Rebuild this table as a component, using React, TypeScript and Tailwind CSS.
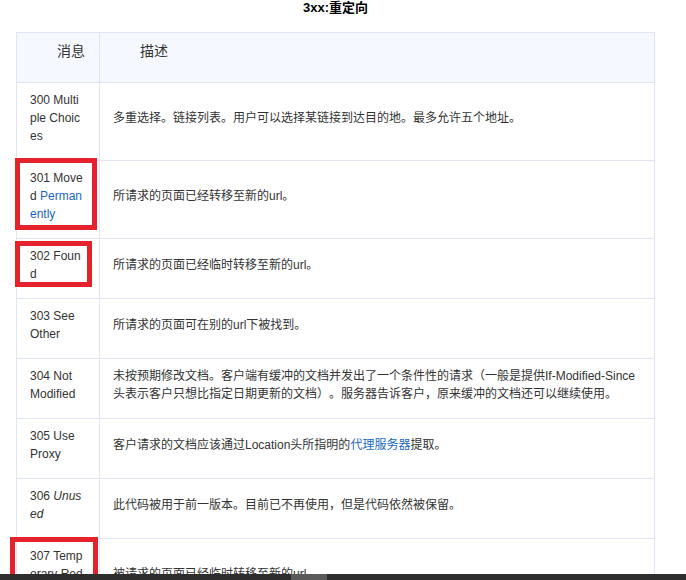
import React from "react";

type Row = { code: React.ReactNode; desc: React.ReactNode };

const link = "text-[#1a66c5]";

const rows: Row[] = [
  {
    code: <>300 Multiple Choices</>,
    desc: <>多重选择。链接列表。用户可以选择某链接到达目的地。最多允许五个地址。</>,
  },
  {
    code: (
      <>
        301 Moved <a className={link}>Permanently</a>
      </>
    ),
    desc: <>所请求的页面已经转移至新的url。</>,
  },
  {
    code: <>302 Found</>,
    desc: <>所请求的页面已经临时转移至新的url。</>,
  },
  {
    code: <>303 See Other</>,
    desc: <>所请求的页面可在别的url下被找到。</>,
  },
  {
    code: <>304 Not Modified</>,
    desc: (
      <>
        未按预期修改文档。客户端有缓冲的文档并发出了一个条件性的请求（一般是提供If-Modified-Since头表示客户只想比指定日期更新的文档）。服务器告诉客户，原来缓冲的文档还可以继续使用。
      </>
    ),
  },
  {
    code: <>305 Use Proxy</>,
    desc: (
      <>
        客户请求的文档应该通过Location头所指明的<a className={link}>代理服务器</a>提取。
      </>
    ),
  },
  {
    code: (
      <>
        306 <i>Unused</i>
      </>
    ),
    desc: <>此代码被用于前一版本。目前已不再使用，但是代码依然被保留。</>,
  },
  {
    code: <>307 Temporary Redirect</>,
    desc: <>被请求的页面已经临时转移至新的url。</>,
  },
];

export default function App() {
  return (
    <div className="relative w-[686px] h-[580px] overflow-hidden bg-white text-[#333] [font-family:'Liberation_Sans','Noto_Sans_CJK_SC',sans-serif] [text-spacing-trim:space-all]">
      <div className="ml-[16px] w-[639px] text-center text-[13px] font-bold leading-[16px] text-black">
        3xx:重定向
      </div>
      <div className="mt-[16px] ml-[16px] w-[639px] border border-[#e0e4f5]">
        <div className="flex h-[50px] border-b border-[#e0e4f5] bg-[#f5f9ff] text-[14px] leading-[20px]">
          <div className="w-[83px] shrink-0 border-r border-[#e0e4f5] pl-[40px] pt-[8px]">消息</div>
          <div className="flex-1 pl-[40px] pt-[8px]">描述</div>
        </div>
        {rows.map((r, i) => (
          <div key={i} className="flex border-b border-[#e0e4f5] text-[12px] leading-[18px]">
            <div className="w-[83px] shrink-0 border-r border-[#e0e4f5] pl-[13px] pt-[8px] pb-[15px]">
              <div className="w-[54.6px] break-all">{r.code}</div>
            </div>
            <div className="flex flex-1 items-center px-[13px] pb-[7px]">
              <div>{r.desc}</div>
            </div>
          </div>
        ))}
      </div>

      <div className="absolute left-[15px] top-[158px] h-[72px] w-[82px] border-[5px] border-[#e5212b]" />
      <div className="absolute left-[15px] top-[241px] h-[46px] w-[77px] border-[5px] border-[#e5212b]" />
      <div className="absolute left-[10px] top-[537px] h-[60px] w-[88px] border-[5px] border-[#e5212b]" />

      <div className="absolute bottom-0 left-0 h-[6px] w-full bg-[#2e2e2e]">
        <div className="absolute left-[291px] top-0 h-full w-[36px] bg-[#5a5a5a]" />
      </div>
    </div>
  );
}
